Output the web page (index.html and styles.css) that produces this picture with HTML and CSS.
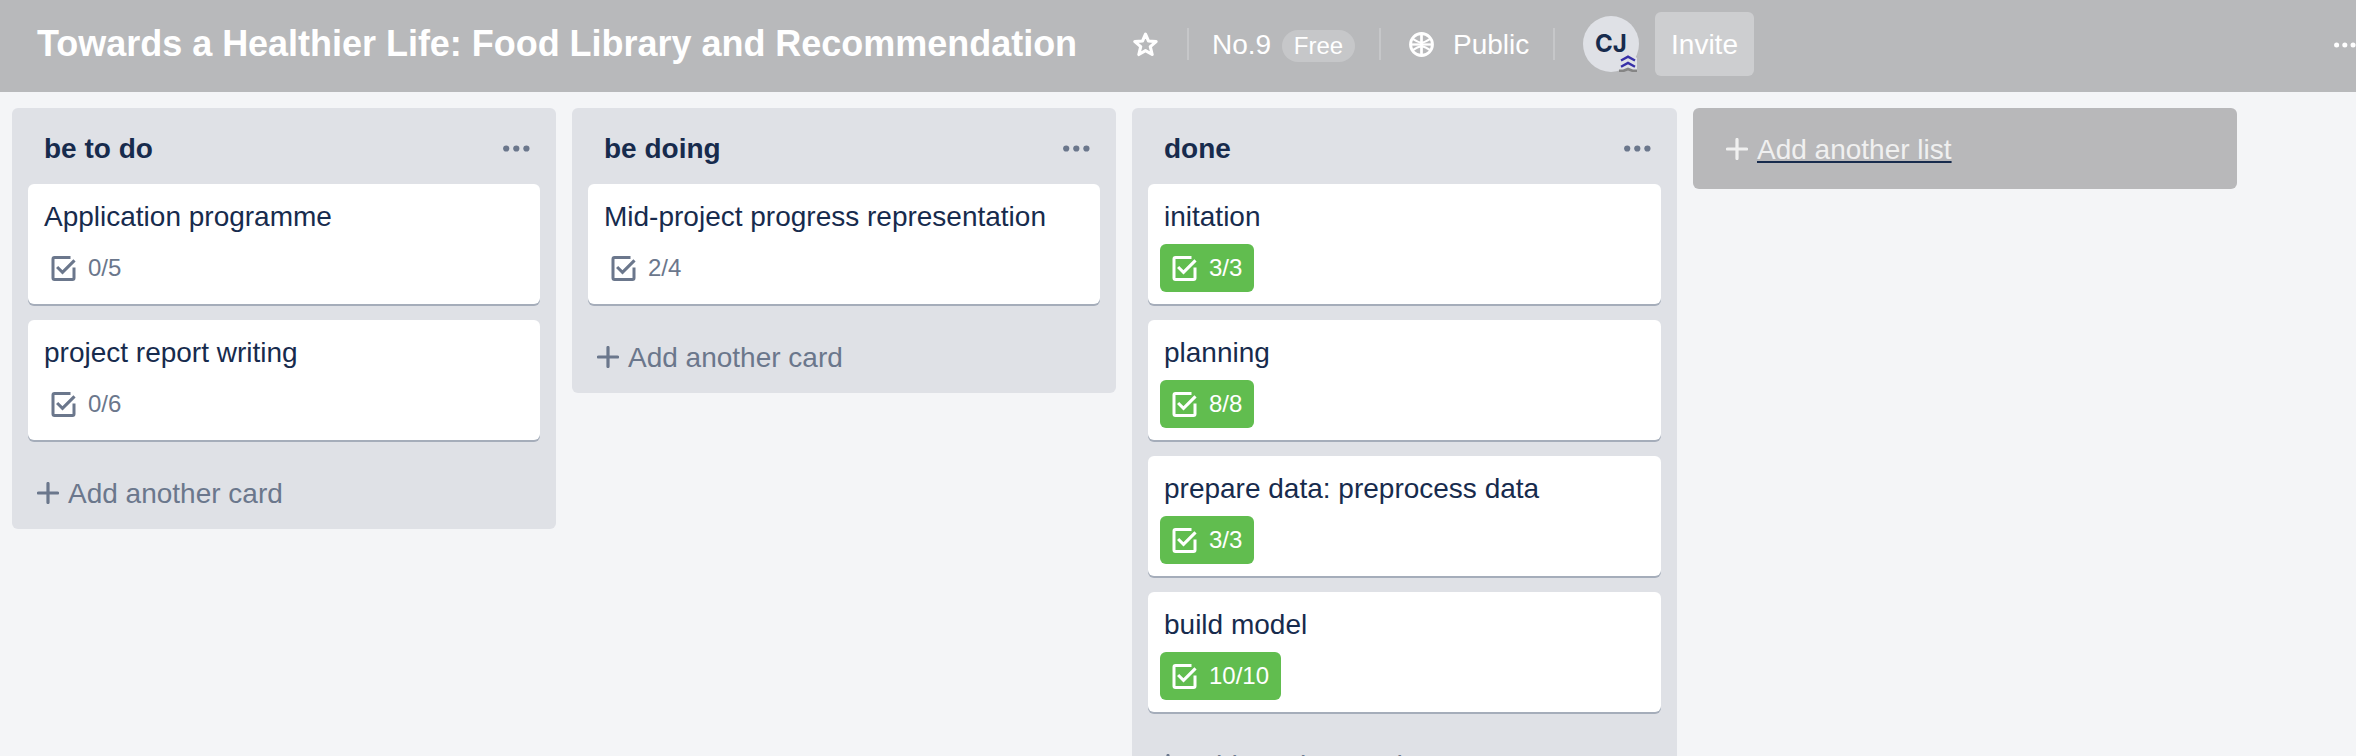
FILE: index.html
```html
<!DOCTYPE html>
<html lang="en">
<head>
<meta charset="utf-8">
<title>Towards a Healthier Life: Food Library and Recommendation</title>
<link rel="stylesheet" href="styles.css">
</head>
<body>
<svg class="defs" aria-hidden="true">
  <symbol id="check" viewBox="0 0 24 25"><path d="M19 1.5H3Q1.5 1.5 1.5 3V22Q1.5 23.5 3 23.5H21Q22.5 23.5 22.5 22V11.500" fill="none" stroke="currentColor" stroke-width="3"/><path d="M5.600 11L11 16.300L23 4.300" fill="none" stroke="currentColor" stroke-width="3.1"/></symbol>
  <symbol id="dots" viewBox="0 0 27 7"><circle cx="3.2" cy="3.5" r="3.1"/><circle cx="13.3" cy="3.5" r="3.1"/><circle cx="23.4" cy="3.5" r="3.1"/></symbol>
  <symbol id="plus" viewBox="0 0 22 22"><path d="M11 1.5V20.500M1.5 11H20.500" fill="none" stroke="currentColor" stroke-width="3.2" stroke-linecap="round"/></symbol>
</svg>
<header class="board-header">
  <h1 class="board-name">Towards a Healthier Life: Food Library and Recommendation</h1>
  <svg class="star" viewBox="0 0 24 24"><path d="M12 2L14.8 8.6L22.2 9.2L16.6 14L18.4 21.6L12 17.8L5.600 21.6L7.400 14L1.8 9.2L9.200 8.600Z" fill="none" stroke="currentColor" stroke-width="3" stroke-linejoin="round"/></svg>
  <span class="divider"></span>
  <span class="team">No.9</span><span class="plan">Free</span>
  <span class="divider"></span>
  <svg class="globe" viewBox="0 0 24 24"><g fill="none" stroke="currentColor"><circle cx="12" cy="12" r="10.500" stroke-width="2.800"/><path d="M12 1V23" stroke-width="2.600"/><path d="M1 12H23" stroke-width="2.200"/><path d="M4 6.800Q8 9.500 12 10.500Q16 9.500 20 6.800M4 17.200Q8 14.500 12 13.500Q16 14.500 20 17.200" stroke-width="2"/></g></svg>
  <span class="public">Public</span>
  <span class="divider"></span>
  <span class="avatar">CJ<svg class="admin" viewBox="0 0 18 18"><path d="M0 4L4 1H14L18 4V16H0Z" fill="#dfe1e6"/><path d="M0 18V15.500H4L9 13.500L14 15.500H18V18H13L9 16.500L5 18Z" fill="#858585"/><path d="M2 6.500L9 2.700L16 6.500M2 12.700L9 8.900L16 12.700" fill="none" stroke="#3730a8" stroke-width="2.400"/></svg></span>
  <a class="invite">Invite</a>
  <svg class="menu-dots"><use href="#dots"/></svg>
</header>
<main class="board">
  <section class="list">
    <div class="list-head"><h2>be to do</h2><svg class="list-dots"><use href="#dots"/></svg></div>
    <article class="card"><p>Application programme</p><span class="badge"><svg><use href="#check"/></svg>0/5</span></article>
    <article class="card"><p>project report writing</p><span class="badge"><svg><use href="#check"/></svg>0/6</span></article>
    <a class="add-card"><svg><use href="#plus"/></svg>Add another card</a>
  </section>
  <section class="list">
    <div class="list-head"><h2>be doing</h2><svg class="list-dots"><use href="#dots"/></svg></div>
    <article class="card"><p>Mid-project progress representation</p><span class="badge"><svg><use href="#check"/></svg>2/4</span></article>
    <a class="add-card"><svg><use href="#plus"/></svg>Add another card</a>
  </section>
  <section class="list list-done">
    <div class="list-head"><h2>done</h2><svg class="list-dots"><use href="#dots"/></svg></div>
    <article class="card"><p>initation</p><span class="badge complete"><svg><use href="#check"/></svg>3/3</span></article>
    <article class="card"><p>planning</p><span class="badge complete"><svg><use href="#check"/></svg>8/8</span></article>
    <article class="card"><p>prepare data: preprocess data</p><span class="badge complete"><svg><use href="#check"/></svg>3/3</span></article>
    <article class="card"><p>build model</p><span class="badge complete"><svg><use href="#check"/></svg>10/10</span></article>
    <a class="add-card"><svg><use href="#plus"/></svg>Add another card</a>
  </section>
  <a class="add-list"><svg><use href="#plus"/></svg><span>Add another list</span></a>
</main>
</body>
</html>
```
FILE: styles.css
```css
* { box-sizing: border-box; }
body {
  margin: 0;
  height: 756px;
  overflow: hidden;
  background: #f4f5f7;
  color: #172b4d;
  font: 28px/40px "Liberation Sans", Arial, sans-serif;
}
h1, h2, p { margin: 0; }
.defs { display: none; }
.board-header {
  display: flex;
  align-items: center;
  height: 92px;
  padding: 0 0 4px 37px;
  background: #b8b9bb;
  color: #fff;
  white-space: nowrap;
  overflow: hidden;
}
.board-header > * { flex: none; }
.board-name { width: 1096px; font-size: 36px; line-height: 48px; letter-spacing: -0.025px; }
.star { width: 25px; height: 25px; margin: 1px 29px 0 0; }
.divider { width: 2px; height: 32px; background: #c6c7c9; }
.team { width: 70px; margin: 2px 0 0 23px; }
.plan {
  width: 73px;
  height: 32px;
  margin: 4px 24px 0 0;
  border-radius: 16px;
  background: #c6c7c9;
  font-size: 24px;
  line-height: 32px;
  text-align: center;
}
.globe { width: 25px; height: 25px; margin: 1px 19px 0 28px; }
.public { width: 100px; margin-top: 2px; }
.avatar {
  position: relative;
  width: 56px;
  height: 56px;
  margin: 0 16px 0 28px;
  border-radius: 50%;
  background: #dfe1e6;
  color: #172b4d;
  font: bold 24px/56px Inter, sans-serif;
  text-align: center;
}
.admin { position: absolute; right: 2px; bottom: 0; width: 18px; height: 18px; }
.invite {
  width: 99px;
  height: 64px;
  border-radius: 6px;
  background: #cdced0;
  line-height: 65px;
  text-align: center;
}
.menu-dots { width: 22px; height: 6px; margin: 1px 0 0 580px; fill: currentColor; }
.board { display: flex; align-items: flex-start; gap: 16px; padding: 16px 12px; }
.list {
  flex: none;
  width: 544px;
  padding: 0 16px 16px;
  border-radius: 6px;
  background: #dfe1e6;
}
.list-done { width: 545px; }
.list-head { display: flex; justify-content: space-between; height: 76px; padding: 21px 10px 0 16px; }
.list-head h2 { font-size: 28px; line-height: 40px; }
.list-dots { width: 27px; height: 7px; margin-top: 16px; fill: #6b778c; }
.card {
  height: 120px;
  margin-bottom: 16px;
  padding: 12px 12px 0;
  border-radius: 6px;
  background: #fff;
  box-shadow: 0 2px 0 #a5adba;
}
.card p { height: 48px; padding: 1px 0 0 4px; white-space: nowrap; }
.badge {
  display: inline-flex;
  align-items: center;
  height: 48px;
  padding: 0 12px;
  border-radius: 6px;
  color: #6b778c;
  font-size: 24px;
  line-height: 44px;
}
.badge svg { width: 25px; height: 25px; margin: 1px 12px 0 -1px; }
.complete { background: #61bd4f; color: #fff; }
.badge.complete svg { margin: 1px 12px 0 0; }
.add-card { display: flex; align-items: center; height: 57px; padding: 18px 0 0 9px; color: #6b778c; }
.add-card svg { width: 22px; height: 22px; margin: -2px 9px 0 0; }
.add-list {
  display: flex;
  align-items: center;
  flex: none;
  width: 544px;
  height: 81px;
  padding: 2px 0 0 33px;
  border-radius: 6px;
  background: #b8b8ba;
  color: #f0f0f0;
}
.add-list svg { width: 22px; height: 22px; margin: -2px 9px 0 0; }
.add-list span { text-decoration: underline #172b4d 2px; text-underline-offset: 2px; text-decoration-skip-ink: none; }
```
